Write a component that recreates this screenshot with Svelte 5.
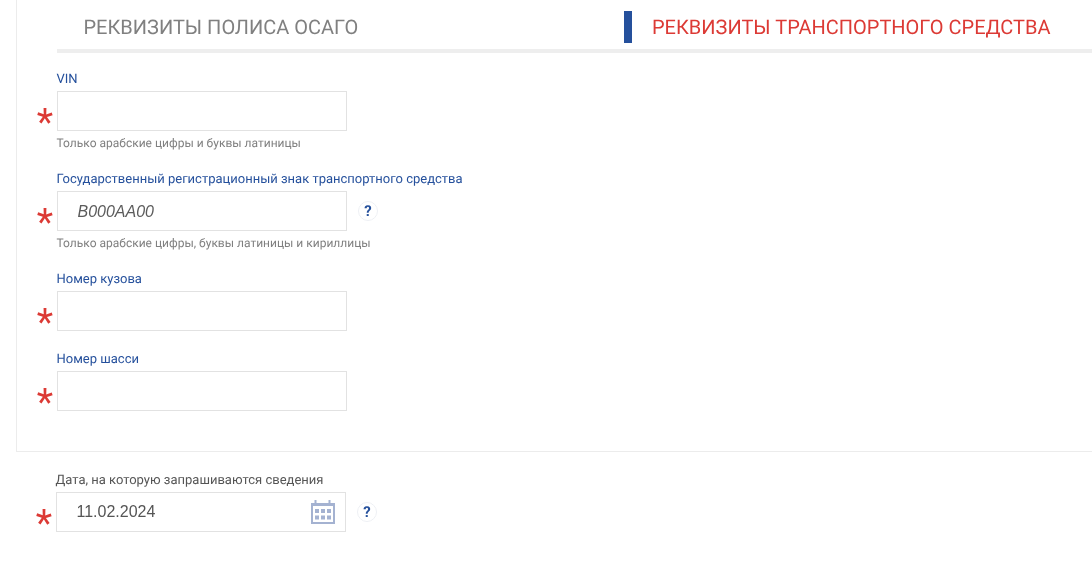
<script>
	const fields = [
		{ label: 'VIN', hint: 'Только арабские цифры и буквы латиницы' },
		{ label: 'Государственный регистрационный знак транспортного средства', placeholder: 'В000АА00', hint: 'Только арабские цифры, буквы латиницы и кириллицы', help: true },
		{ label: 'Номер кузова' },
		{ label: 'Номер шасси' }
	]
</script>

<div class="page">
	<section class="panel">
		<div class="tabs">
			<div class="tab">РЕКВИЗИТЫ ПОЛИСА ОСАГО</div>
			<div class="tab active">РЕКВИЗИТЫ ТРАНСПОРТНОГО СРЕДСТВА</div>
		</div>

		{#each fields as field}
			<div class="field">
				<label>
					<span class="label">{field.label}</span>
					<div class="row">
						<span class="req">*</span>
						<input class:plate={field.placeholder} type="text" placeholder={field.placeholder ?? ''} />
						{#if field.help}<span class="help">?</span>{/if}
					</div>
				</label>
				{#if field.hint}<div class="hint">{field.hint}</div>{/if}
			</div>
		{/each}
	</section>

	<div class="date-block">
		<span class="label dark">Дата, на которую запрашиваются сведения</span>
		<div class="row">
			<span class="req">*</span>
			<div class="date-wrap">
				<input type="text" value="11.02.2024" />
				<svg class="cal" width="24" height="24" viewBox="0 0 24 24">
					<path fill="#a4b2d1" fill-rule="evenodd" d="M0 3h24v21H0zM2 6v16h20V6z" />
					<g fill="#a4b2d1">
						<rect x="3.500" y="0" width="2" height="5" />
						<rect x="17.500" y="0" width="2" height="5" />
						<rect x="4" y="9" width="4" height="4" />
						<rect x="10" y="9" width="4" height="4" />
						<rect x="16" y="9" width="4" height="4" />
						<rect x="4" y="15.500" width="4" height="4" />
						<rect x="10" y="15.500" width="4" height="4" />
						<rect x="16" y="15.500" width="4" height="4" />
					</g>
				</svg>
			</div>
			<span class="help">?</span>
		</div>
	</div>
</div>

<style>
	:global(body) {
		background: #fff;
		font-family: Roboto, "Liberation Sans", sans-serif;
		text-rendering: geometricPrecision;
	}

	.page {
		height: 571px;
		overflow: hidden;
		padding-left: 16px;
		will-change: transform;
	}

	.panel {
		border-left: 1px solid #ececec;
		border-bottom: 1px solid #ececec;
		padding-left: 40px;
		height: 452px;
		box-sizing: border-box;
	}

	.tabs {
		display: flex;
		height: 53px;
		box-sizing: border-box;
		border-bottom: 4px solid #eeeeee;
		margin-bottom: 17px;
		padding-top: 11px;
	}

	.tab {
		font-size: 20px;
		line-height: 32px;
		height: 32px;
		color: #808080;
		padding-left: 26.5px;
		width: 540.5px;
	}

	.tab.active {
		color: #dc3a35;
		border-left: 8px solid #25509c;
		padding-left: 20px;
		width: auto;
		white-space: nowrap;
	}

	.field {
		margin-bottom: 19px;
	}

	.label {
		display: block;
		font-size: 13px;
		line-height: 19px;
		height: 21px;
		margin-left: -0.5px;
		color: #25509c;
	}

	.label.dark {
		color: #555;
	}

	.row {
		display: flex;
		align-items: center;
		position: relative;
	}

	.req {
		position: absolute;
		left: -25px;
		top: 9px;
		width: 26px;
		font-size: 38px;
		line-height: 46px;
		text-align: center;
		color: #dc3a35;
	}

	input {
		width: 290px;
		height: 40px;
		box-sizing: border-box;
		border: 1px solid #e2e2e2;
		padding: 0 19.5px;
		font-family: "Liberation Sans", Arial, sans-serif;
		font-size: 16px;
		color: #555;
		outline: none;
		display: block;
		background: #fff;
	}

	input.plate {
		padding-top: 1px;
	}

	input::placeholder {
		color: #5c5c5c;
		font-style: italic;
		opacity: 1;
	}

	.help {
		width: 20px;
		height: 20px;
		box-sizing: border-box;
		border: 1px solid #eef0f4;
		border-radius: 50%;
		margin-left: 11px;
		font-size: 15px;
		font-weight: 700;
		line-height: 18px;
		text-align: center;
		color: #25509c;
	}

	.hint {
		font-size: 12px;
		line-height: 16px;
		margin-top: 4px;
		margin-left: -0.5px;
		color: #808080;
	}

	.date-block {
		margin-top: 19px;
		margin-left: 40px;
	}

	.date-wrap {
		position: relative;
	}

	.cal {
		position: absolute;
		right: 11px;
		top: 8px;
	}
</style>
